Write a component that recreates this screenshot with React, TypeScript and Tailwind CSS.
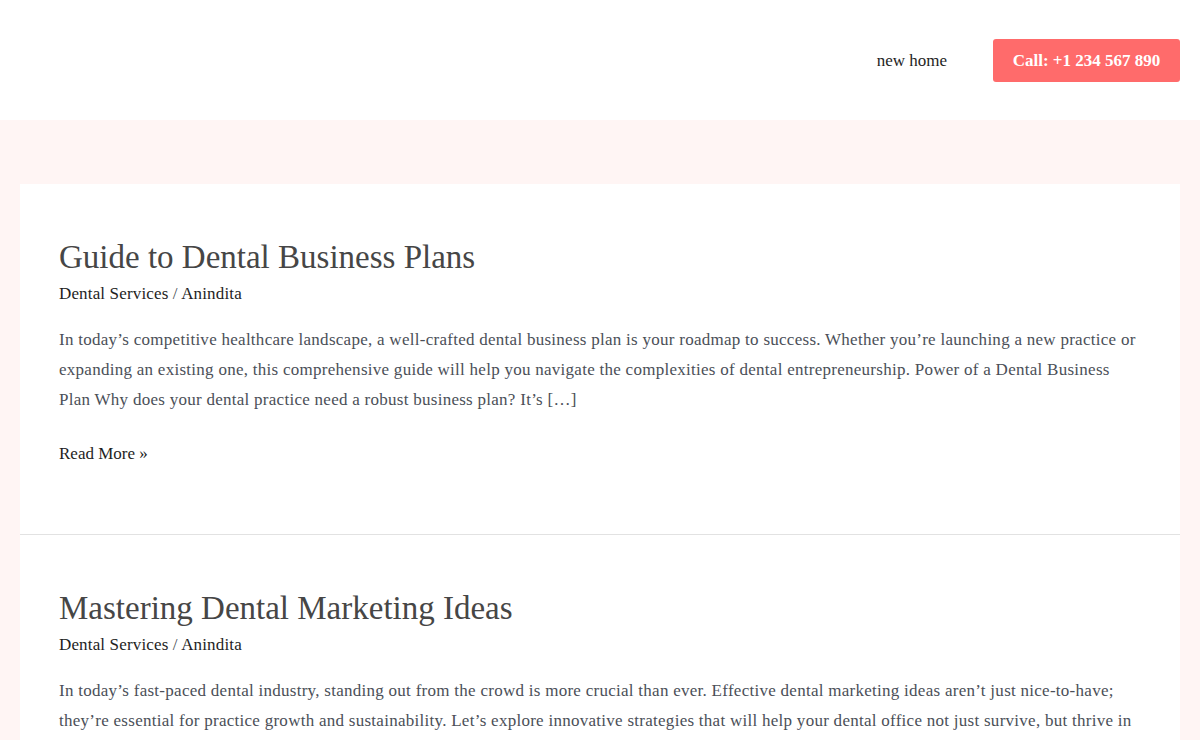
const posts = [
  {
    title: "Guide to Dental Business Plans",
    excerpt:
      "In today’s competitive healthcare landscape, a well-crafted dental business plan is your roadmap to success. Whether you’re launching a new practice or expanding an existing one, this comprehensive guide will help you navigate the complexities of dental entrepreneurship. Power of a Dental Business Plan Why does your dental practice need a robust business plan? It’s […]",
  },
  {
    title: "Mastering Dental Marketing Ideas",
    excerpt:
      "In today’s fast-paced dental industry, standing out from the crowd is more crucial than ever. Effective dental marketing ideas aren’t just nice-to-have; they’re essential for practice growth and sustainability. Let’s explore innovative strategies that will help your dental office not just survive, but thrive in today’s competitive market. Understanding Modern Dental Marketing Let’s start […]",
  },
];

export default function App() {
  return (
    <div className="min-h-screen bg-[#fff5f4] font-['Liberation_Serif',serif]">
      {/* Header */}
      <header className="bg-white h-[120px] flex items-center justify-end pr-5">
        <nav className="flex items-center">
          <a href="#" className="text-[17px] text-[#1e1e1e] mr-[46px] pt-[2px]">
            new home
          </a>
          <a
            href="#"
            className="inline-flex items-center justify-center h-[43px] w-[187px] pt-[2px] rounded-[3px] bg-[#ff6b6b] text-white font-bold text-[17px]"
          >
            Call: +1 234 567 890
          </a>
        </nav>
      </header>

      {/* Posts */}
      <main className="pt-16 px-5">
        <div className="bg-white">
          {posts.map((post) => (
            <article
              key={post.title}
              className="px-[39px] pt-[52px] pb-[67px] border-b border-[#e2e2e2]"
            >
              <h2 className="text-[33px] leading-[1.3] text-[#464646]">
                {post.title}
              </h2>
              <div className="mt-[2px] text-[17px] tracking-[0.15px] text-[#1e1e1e]">
                <a href="#">Dental Services</a>
                <span className="text-[#4b4f58]"> / </span>
                <a href="#">Anindita</a>
              </div>
              <p className="mt-[19px] text-[17px] tracking-[0.27px] leading-[29.6px] text-[#4b4f58]">
                {post.excerpt}
              </p>
              <a href="#" className="inline-block mt-[27px] text-[17px] text-[#1e1e1e]">
                Read More »
              </a>
            </article>
          ))}
        </div>
      </main>
    </div>
  );
}
